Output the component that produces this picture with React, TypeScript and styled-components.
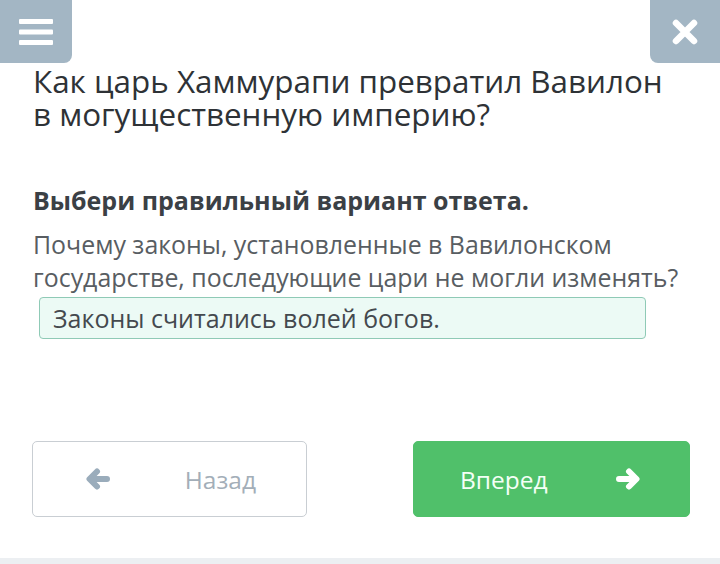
import React from 'react';
import styled, { createGlobalStyle } from 'styled-components';

const GlobalStyle = createGlobalStyle`
  html, body {
    margin: 0;
    padding: 0;
    background: #ffffff;
    font-family: "Open Sans", "Noto Sans", sans-serif;
  }
`;

const Page = styled.div`
  width: 720px;
  height: 564px;
  display: flex;
  flex-direction: column;
  overflow: hidden;
  position: relative;
`;

const TopBar = styled.div`
  display: flex;
  justify-content: space-between;
  height: 0;
`;

const CornerButton = styled.button<{ side: 'left' | 'right' }>`
  width: ${p => (p.side === 'left' ? '72px' : '70px')};
  height: 63px;
  border: none;
  padding: 0;
  background: #a3b6c4;
  border-radius: ${p => (p.side === 'left' ? '0 0 8px 0' : '0 0 0 8px')};
  display: flex;
  align-items: center;
  justify-content: center;
  position: relative;
  z-index: 1;
`;

const Content = styled.div`
  padding: 64px 32px 0 33px;
  display: flex;
  flex-direction: column;
`;

const Title = styled.h1`
  margin: 0;
  font-size: 31.4px;
  font-weight: 400;
  line-height: 33px;
  color: #2e3236;
`;

const Instruction = styled.h2`
  margin: 54px 0 0;
  font-size: 25px;
  font-weight: 700;
  line-height: 32px;
  color: #3b4045;
`;

const Question = styled.p`
  margin: 12px 0 0;
  font-size: 24.9px;
  font-weight: 400;
  line-height: 33px;
  color: #585d62;
`;

const Answer = styled.div`
  margin: 3px 0 0 6px;
  width: 607px;
  height: 42px;
  box-sizing: border-box;
  border: 1px solid #8fcab6;
  border-radius: 4px;
  background: #ecfaf5;
  padding: 0 13px;
  display: flex;
  align-items: center;
  font-size: 25px;
  color: #44494e;
`;

const Nav = styled.div`
  margin-top: 102px;
  padding: 0 30px 0 32px;
  display: flex;
  justify-content: space-between;
`;

const NavButton = styled.button<{ primary?: boolean }>`
  width: ${p => (p.primary ? '277px' : '275px')};
  height: 76px;
  box-sizing: border-box;
  border-radius: 5px;
  border: 1px solid ${p => (p.primary ? '#50c06a' : '#c9ced3')};
  background: ${p => (p.primary ? '#50c06a' : '#ffffff')};
  color: ${p => (p.primary ? '#f4fff6' : '#a3aeb8')};
  font-family: "Open Sans", "Noto Sans", sans-serif;
  font-size: 24.5px;
  display: flex;
  align-items: center;
  justify-content: space-between;
  padding: ${p => (p.primary ? '0 48px 0 46px' : '0 50px 0 52px')};
`;

const ArrowIcon = styled.span<{ primary?: boolean }>`
  display: flex;
  color: ${p => (p.primary ? '#ffffff' : '#9aacbb')};
`;

const Spacer = styled.span`
  flex: 1;
`;

const BottomStrip = styled.div`
  position: absolute;
  left: 0;
  right: 0;
  bottom: 0;
  height: 6px;
  background: #eceff2;
`;

const MenuIcon = () => (
  <svg width="34" height="28" viewBox="0 0 34 28">
    <rect x="0" y="1" width="34" height="5" rx="1" fill="#fff" />
    <rect x="0" y="11.5" width="34" height="5" rx="1" fill="#fff" />
    <rect x="0" y="22" width="34" height="5" rx="1" fill="#fff" />
  </svg>
);

const CloseIcon = () => (
  <svg width="28" height="28" viewBox="0 0 28 28">
    <path d="M5 5 L23 23 M23 5 L5 23" stroke="#fff" strokeWidth="6.5" strokeLinecap="round" />
  </svg>
);

const Arrow = ({ dir }: { dir: 'left' | 'right' }) => (
  <svg
    width="26"
    height="22"
    viewBox="0 0 26 22"
    style={{ transform: dir === 'right' ? 'scaleX(-1)' : undefined }}
  >
    <path
      d="M12 3.5 L4.5 11 L12 18.5 M5 11 L22 11"
      fill="none"
      stroke="currentColor"
      strokeWidth="6"
      strokeLinecap="round"
      strokeLinejoin="round"
    />
  </svg>
);

export default function App() {
  return (
    <Page>
      <GlobalStyle />
      <TopBar>
        <CornerButton side="left">
          <MenuIcon />
        </CornerButton>
        <CornerButton side="right">
          <CloseIcon />
        </CornerButton>
      </TopBar>
      <Content>
        <Title>
          Как царь Хаммурапи превратил Вавилон
          <br />в могущественную империю?
        </Title>
        <Instruction>Выбери правильный вариант ответа.</Instruction>
        <Question>
          Почему законы, установленные в Вавилонском государстве, последующие цари не могли изменять?
        </Question>
        <Answer>Законы считались волей богов.</Answer>
      </Content>
      <Nav>
        <NavButton>
          <ArrowIcon>
            <Arrow dir="left" />
          </ArrowIcon>
          <Spacer />
          Назад
        </NavButton>
        <NavButton primary>
          Вперед
          <Spacer />
          <ArrowIcon primary>
            <Arrow dir="right" />
          </ArrowIcon>
        </NavButton>
      </Nav>
      <BottomStrip />
    </Page>
  );
}
